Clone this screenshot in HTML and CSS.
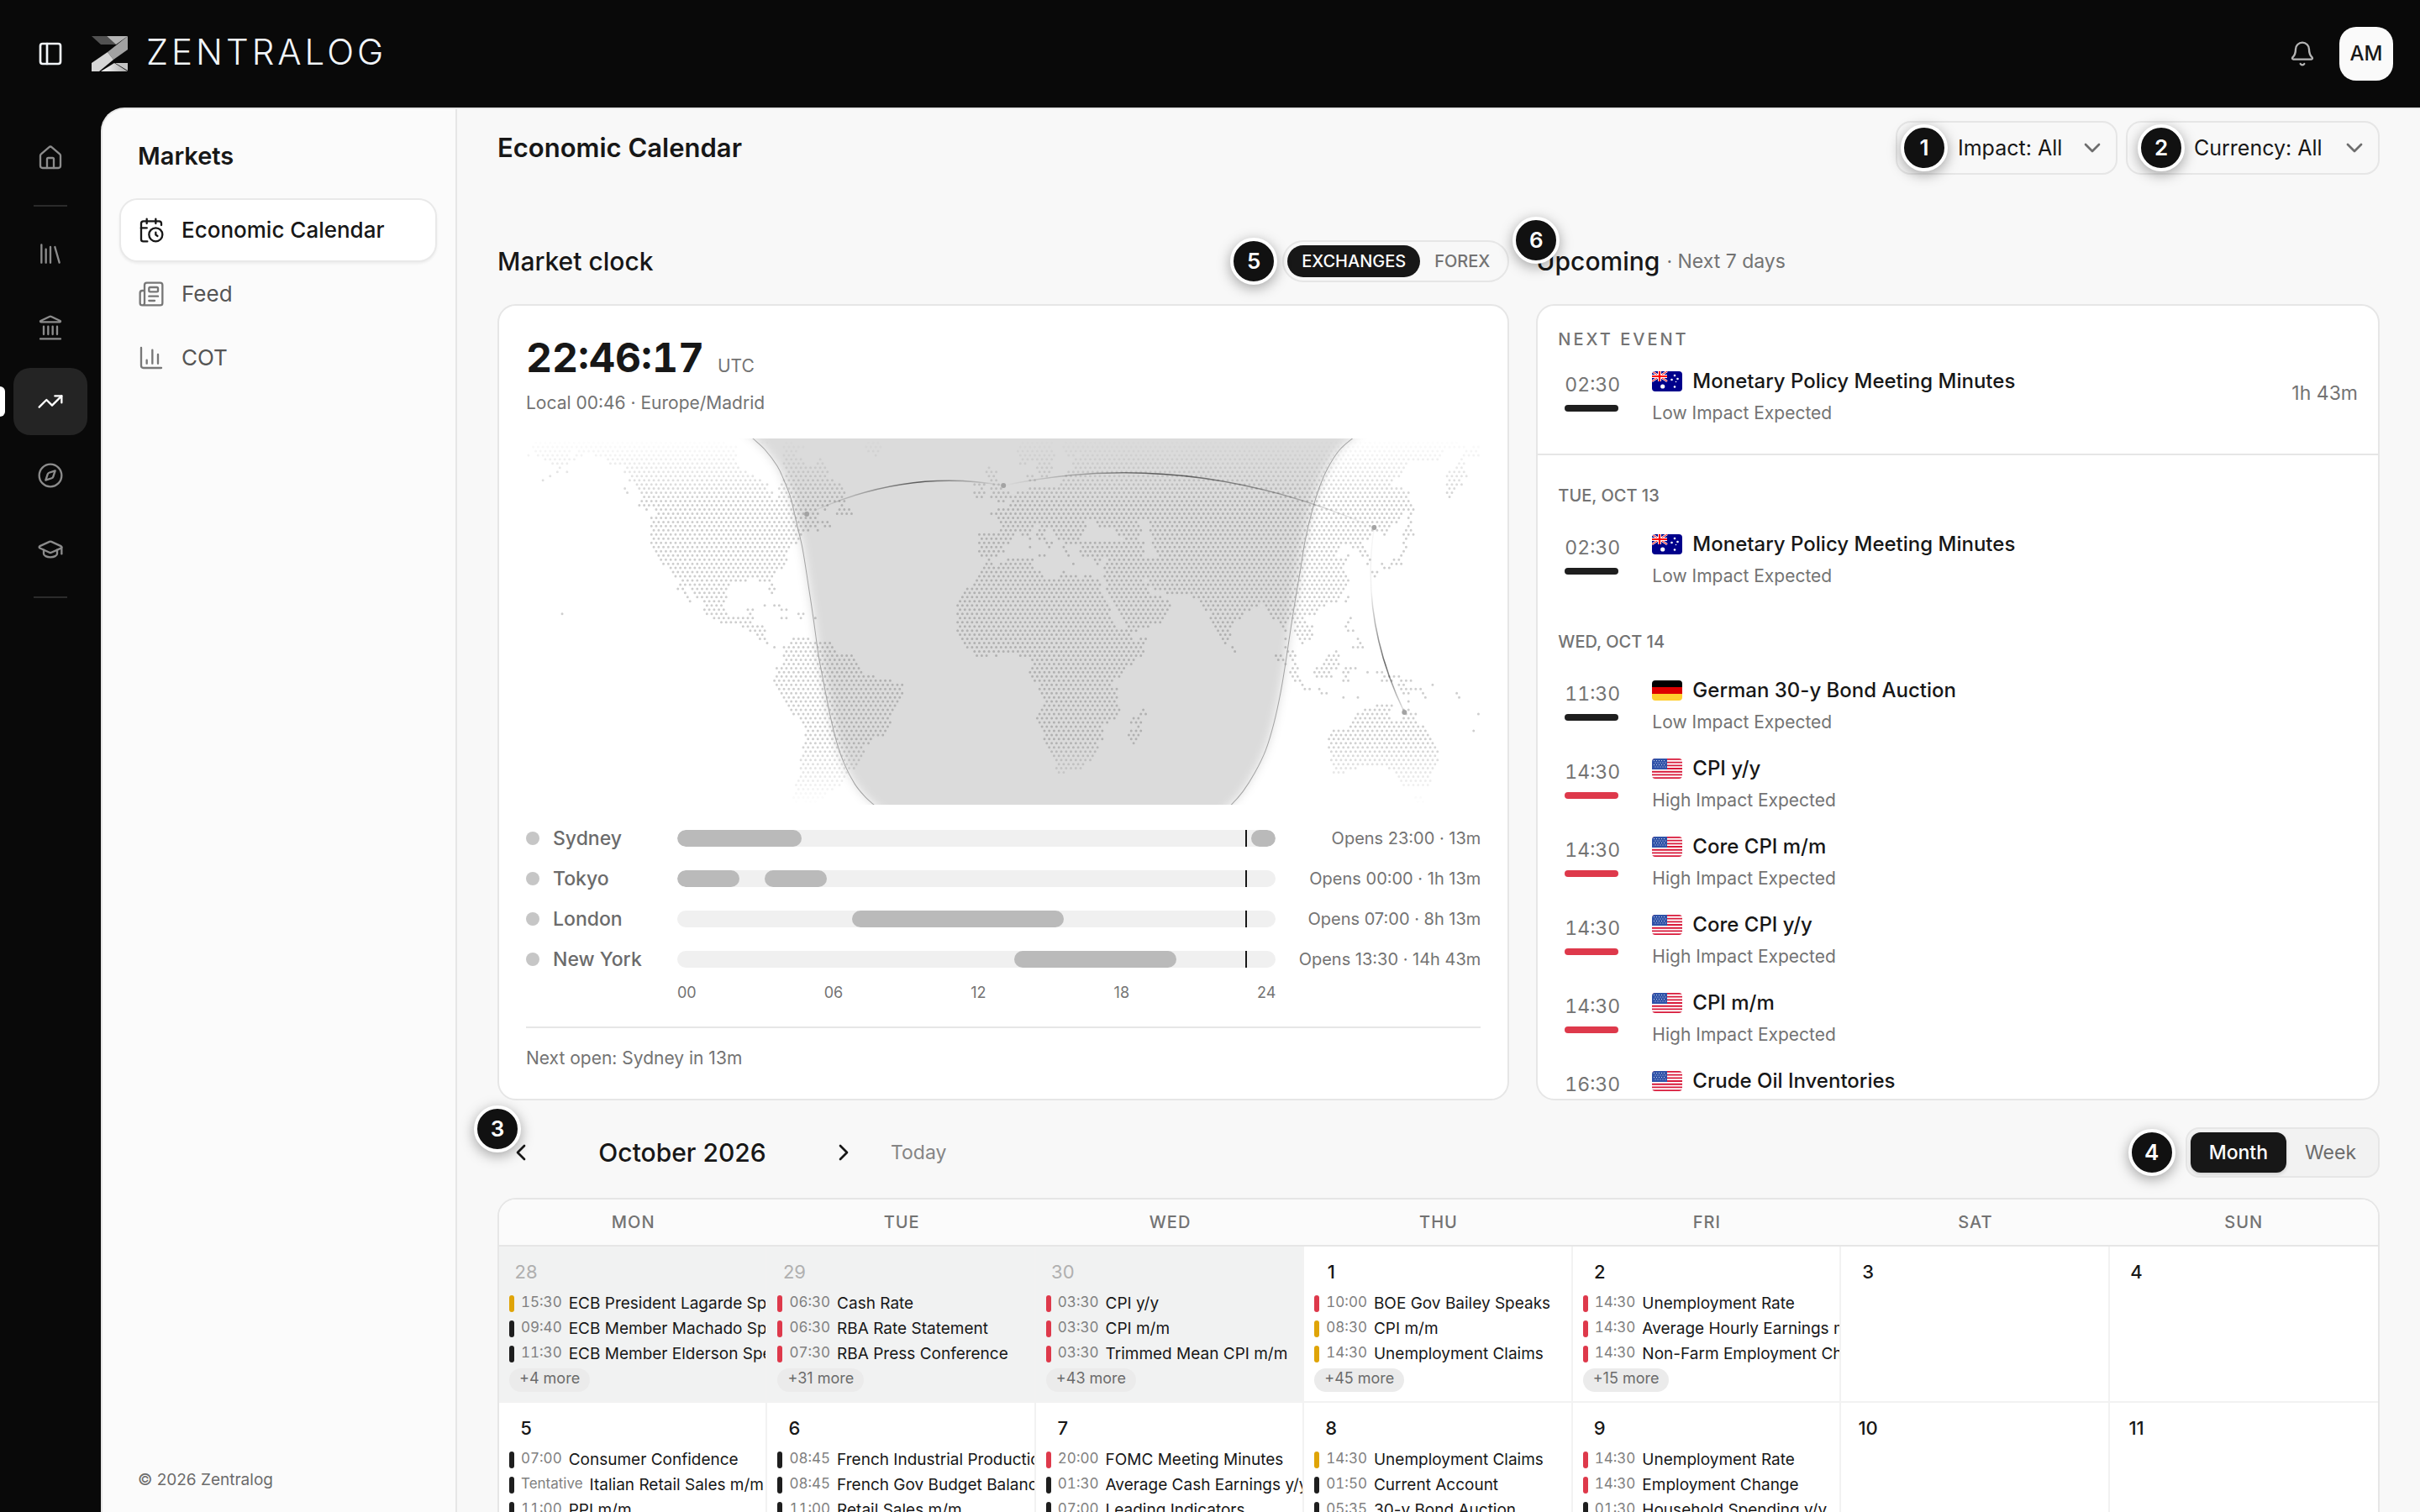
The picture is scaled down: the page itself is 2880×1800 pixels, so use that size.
FILE: index.html
```html
<!DOCTYPE html>
<html lang="en">
<head>
<meta charset="utf-8">
<title>Economic Calendar · Zentralog</title>
<link rel="stylesheet" href="styles.css">
</head>
<body>
<svg class="defs" aria-hidden="true">
  <symbol id="flag-au" viewBox="0 0 36 24">
    <path fill="#00008b" d="M0 0h36v24H0z"/>
    <path stroke="#fff" stroke-width="2.6" d="M0 0l18 12M18 0L0 12"/>
    <path stroke="#f00" stroke-width="1" d="M0 0l18 12M18 0L0 12"/>
    <path stroke="#fff" stroke-width="4" d="M9 0v12M0 6h18"/>
    <path stroke="#f00" stroke-width="2.2" d="M9 0v12M0 6h18"/>
    <g fill="#fff"><circle cx="12.700" cy="18" r="2.600"/><circle cx="27" cy="5" r="1.300"/><circle cx="23.500" cy="10" r="1.300"/><circle cx="30.500" cy="9" r="1.300"/><circle cx="28.500" cy="12.500" r=".8"/><circle cx="27" cy="18.500" r="1.300"/></g>
  </symbol>
  <symbol id="flag-de" viewBox="0 0 36 24">
    <path fill="#000" d="M0 0h36v8H0z"/><path fill="#d00" d="M0 8h36v8H0z"/><path fill="#ffce2e" d="M0 16h36v8H0z"/>
  </symbol>
  <symbol id="flag-us" viewBox="0 0 36 24">
    <path fill="#fff" d="M0 0h36v24H0z"/>
    <path stroke="#d8193a" stroke-width="1.850" d="M0 .9h36M0 4.600h36M0 8.300h36M0 12h36M0 15.700h36M0 19.400h36M0 23.100h36"/>
    <path fill="#2f52a8" d="M0 0h18v13H0z"/>
    <path stroke="#fff" stroke-width="1" stroke-dasharray="1 2" d="M2 2.500h15M3.500 5h13M2 7.500h15M3.500 10h13" opacity=".75"/>
  </symbol>
  <symbol id="chevron-down" viewBox="0 0 24 24"><path d="m6 9 6 6 6-6"/></symbol>
</svg>

<header class="topbar">
  <button class="icon-button" aria-label="Toggle sidebar">
    <svg class="icon" viewBox="0 0 24 24"><rect width="18" height="18" x="3" y="3" rx="2"/><path d="M9 3v18"/></svg>
  </button>
  <a class="brand" href="#">
    <svg class="brand-mark" viewBox="0 0 43 42" aria-hidden="true">
      <defs><linearGradient id="fold"><stop offset="0" stop-color="#fff"/><stop offset="1" stop-color="#a8a8a8"/></linearGradient></defs>
      <path fill="#525252" d="M0 0h18l11 10H11z"/>
      <path fill="#b4b4b4" d="M18 0h25L29 10z"/>
      <path fill="#a2a2a2" d="M43 0v16L26 28l-7-9z"/>
      <path fill="#d6d6d6" d="M19 19l7 9L9 42H0V32z"/>
      <path fill="url(#fold)" d="M11 42l16-10 16 10z"/>
      <path fill="#c4c4c4" d="M28 32h15v9z"/>
    </svg>
    <span class="brand-name">ZENTRALOG</span>
  </a>
  <button class="icon-button bell" aria-label="Notifications">
    <svg class="icon" viewBox="0 0 24 24"><path d="M10.268 21a2 2 0 0 0 3.464 0"/><path d="M3.262 15.326A1 1 0 0 0 4 17h16a1 1 0 0 0 .74-1.673C19.410 13.956 18 12.499 18 8A6 6 0 0 0 6 8c0 4.499-1.411 5.956-2.738 7.326"/></svg>
  </button>
  <button class="avatar">AM</button>
</header>

<div class="shell">
  <nav class="rail" aria-label="Sections">
    <a href="#" class="rail-link" aria-label="Home"><svg class="icon" viewBox="0 0 24 24"><path d="M15 21v-8a1 1 0 0 0-1-1h-4a1 1 0 0 0-1 1v8"/><path d="M3 10a2 2 0 0 1 .709-1.528l7-5.999a2 2 0 0 1 2.582 0l7 5.999A2 2 0 0 1 21 10v9a2 2 0 0 1-2 2H5a2 2 0 0 1-2-2z"/></svg></a>
    <hr class="rail-rule">
    <a href="#" class="rail-link" aria-label="Library"><svg class="icon" viewBox="0 0 24 24"><path d="m16 6 4 14M12 6v14M8 8v12M4 4v16"/></svg></a>
    <a href="#" class="rail-link" aria-label="Institutions"><svg class="icon" viewBox="0 0 24 24"><path d="M10 18v-7M14 18v-7M18 18v-7M6 18v-7M3 22h18"/><path d="M11.120 2.198a2 2 0 0 1 1.760.006l7.866 3.847c.476.233.310.949-.220.949H3.474c-.530 0-.695-.716-.220-.949z"/></svg></a>
    <a href="#" class="rail-link is-active" aria-label="Markets"><svg class="icon" viewBox="0 0 24 24"><path d="M16 7h6v6"/><path d="m22 7-8.500 8.500-5-5L2 17"/></svg></a>
    <a href="#" class="rail-link" aria-label="Explore"><svg class="icon" viewBox="0 0 24 24"><circle cx="12" cy="12" r="10"/><path d="m16.240 7.760-1.804 5.411a2 2 0 0 1-1.265 1.265L7.760 16.240l1.804-5.411a2 2 0 0 1 1.265-1.265z"/></svg></a>
    <a href="#" class="rail-link" aria-label="Academy"><svg class="icon" viewBox="0 0 24 24"><path d="M21.420 10.922a1 1 0 0 0-.019-1.838L12.830 5.180a2 2 0 0 0-1.660 0L2.600 9.080a1 1 0 0 0 0 1.832l8.570 3.908a2 2 0 0 0 1.660 0z"/><path d="M22 10v6"/><path d="M6 12.500V16a6 3 0 0 0 12 0v-3.500"/></svg></a>
    <hr class="rail-rule">
  </nav>

  <div class="workspace">
    <aside class="sidebar">
      <h2 class="sidebar-title">Markets</h2>
      <nav class="sidebar-nav" aria-label="Markets">
        <a href="#" class="side-link is-active"><svg class="icon" viewBox="0 0 24 24"><path d="M16 14v2.200l1.600 1"/><path d="M16 2v4"/><path d="M21 7.500V6a2 2 0 0 0-2-2H5a2 2 0 0 0-2 2v14a2 2 0 0 0 2 2h3.500"/><path d="M3 10h5"/><path d="M8 2v4"/><circle cx="16" cy="16" r="6"/></svg>Economic Calendar</a>
        <a href="#" class="side-link"><svg class="icon" viewBox="0 0 24 24"><path d="M15 18h-5M18 14h-8"/><path d="M4 22h16a2 2 0 0 0 2-2V4a2 2 0 0 0-2-2H8a2 2 0 0 0-2 2v16a2 2 0 0 1-4 0v-9a2 2 0 0 1 2-2h2"/><rect width="8" height="4" x="10" y="6" rx="1"/></svg>Feed</a>
        <a href="#" class="side-link"><svg class="icon" viewBox="0 0 24 24"><path d="M3 3v16a2 2 0 0 0 2 2h16M18 17V9M13 17V5M8 17v-3"/></svg>COT</a>
      </nav>
      <p class="copyright">© 2026 Zentralog</p>
    </aside>

    <main class="main">
      <header class="page-head">
        <h1 class="page-title">Economic Calendar</h1>
        <div class="filters">
          <div class="filter filter-impact">
            <select aria-label="Impact"><option>Impact: All</option></select>
            <svg class="icon chevron"><use href="#chevron-down"/></svg>
            <span class="badge">1</span>
          </div>
          <div class="filter filter-currency">
            <select aria-label="Currency"><option>Currency: All</option></select>
            <svg class="icon chevron"><use href="#chevron-down"/></svg>
            <span class="badge">2</span>
          </div>
        </div>
      </header>

      <div class="overview">
        <section class="column">
          <div class="section-head">
            <h2 class="section-title">Market clock</h2>
            <div class="pill-toggle">
              <span class="badge">5</span>
              <button class="is-on">EXCHANGES</button><button>FOREX</button>
            </div>
          </div>
          <div class="card clock">
            <p class="time"><span class="time-value">22:46:17</span><span class="time-zone">UTC</span></p>
            <p class="local">Local 00:46 · Europe/Madrid</p>
            <svg class="map" viewBox="0 0 1136 436" role="img" aria-label="World map with night area">
              <defs>
                <linearGradient id="fade" x2="0" y2="1"><stop offset="0" stop-color="#fff" stop-opacity="0"/><stop offset=".18" stop-color="#fff"/><stop offset=".82" stop-color="#fff"/><stop offset="1" stop-color="#fff" stop-opacity="0"/></linearGradient>
                <mask id="fade-mask" maskUnits="userSpaceOnUse" x="0" y="0" width="1136" height="436"><path fill="url(#fade)" d="M0 0h1136v436H0z"/></mask>
                <filter id="dusk" x="-10%" width="120%"><feGaussianBlur stdDeviation="6"/></filter>
                <linearGradient id="arc-a" gradientUnits="userSpaceOnUse" x1="334" y1="0" x2="568" y2="0"><stop offset="0" stop-opacity="0"/><stop offset=".25" stop-opacity=".22"/><stop offset=".58" stop-opacity=".6"/><stop offset=".85" stop-opacity=".2"/><stop offset="1" stop-opacity="0"/></linearGradient>
                <linearGradient id="arc-b" gradientUnits="userSpaceOnUse" x1="568" y1="0" x2="1009" y2="0"><stop offset="0" stop-opacity="0"/><stop offset=".2" stop-opacity=".25"/><stop offset=".42" stop-opacity=".6"/><stop offset=".75" stop-opacity=".3"/><stop offset="1" stop-opacity="0"/></linearGradient>
                <linearGradient id="arc-c" gradientUnits="userSpaceOnUse" x1="0" y1="106" x2="0" y2="326"><stop offset="0" stop-opacity=".03"/><stop offset=".35" stop-opacity=".06"/><stop offset=".74" stop-opacity=".6"/><stop offset="1" stop-opacity=".1"/></linearGradient>
              </defs>
              <g mask="url(#fade-mask)"><path id="land" class="land"/></g>
              <path id="night" class="night" filter="url(#dusk)"/>
              <path id="dusk-line" class="dusk-line"/>
              <path id="dawn-line" class="dusk-line"/>
              <path class="arc" stroke="url(#arc-a)" d="M334 90Q451 35 568 56"/>
              <path class="arc" stroke="url(#arc-b)" d="M568 56Q788 9 1009 106"/>
              <path class="arc" stroke="url(#arc-c)" d="M1009 106Q992 216 1045 326"/>
              <g class="city"><circle cx="334" cy="90" r="3"/><circle cx="568" cy="56" r="3"/><circle cx="1009" cy="106" r="3"/><circle cx="1045" cy="326" r="3"/></g>
            </svg>
            <div class="sessions">
              <div class="session"><span class="city-name">Sydney</span><span class="track"><i style="left:0;width:20.83%"></i><i style="left:95.83%;width:4.17%"></i></span><span class="opens">Opens 23:00 · 13m</span></div>
              <div class="session"><span class="city-name">Tokyo</span><span class="track"><i style="left:0;width:10.42%"></i><i style="left:14.58%;width:10.42%"></i></span><span class="opens">Opens 00:00 · 1h 13m</span></div>
              <div class="session"><span class="city-name">London</span><span class="track"><i style="left:29.17%;width:35.42%"></i></span><span class="opens">Opens 07:00 · 8h 13m</span></div>
              <div class="session"><span class="city-name">New York</span><span class="track"><i style="left:56.25%;width:27.08%"></i></span><span class="opens">Opens 13:30 · 14h 43m</span></div>
            </div>
            <div class="axis"><span>00</span><span>06</span><span>12</span><span>18</span><span>24</span></div>
            <p class="next-open">Next open: Sydney in 13m</p>
          </div>
        </section>

        <section class="column">
          <div class="section-head">
            <h2 class="section-title">Upcoming</h2><span class="section-note">· Next 7 days</span>
            <span class="badge">6</span>
          </div>
          <div class="card upcoming">
            <div class="next-event">
              <h3 class="eyebrow">NEXT EVENT</h3>
              <article class="event low"><time class="event-time">02:30</time><div class="event-body"><h4><svg class="flag"><use href="#flag-au"/></svg>Monetary Policy Meeting Minutes</h4><p>Low Impact Expected</p></div><span class="countdown">1h 43m</span></article>
            </div>
            <h3 class="day-head">TUE, OCT 13</h3>
            <article class="event low"><time class="event-time">02:30</time><div class="event-body"><h4><svg class="flag"><use href="#flag-au"/></svg>Monetary Policy Meeting Minutes</h4><p>Low Impact Expected</p></div></article>
            <h3 class="day-head">WED, OCT 14</h3>
            <article class="event low"><time class="event-time">11:30</time><div class="event-body"><h4><svg class="flag"><use href="#flag-de"/></svg>German 30-y Bond Auction</h4><p>Low Impact Expected</p></div></article>
            <article class="event high"><time class="event-time">14:30</time><div class="event-body"><h4><svg class="flag"><use href="#flag-us"/></svg>CPI y/y</h4><p>High Impact Expected</p></div></article>
            <article class="event high"><time class="event-time">14:30</time><div class="event-body"><h4><svg class="flag"><use href="#flag-us"/></svg>Core CPI m/m</h4><p>High Impact Expected</p></div></article>
            <article class="event high"><time class="event-time">14:30</time><div class="event-body"><h4><svg class="flag"><use href="#flag-us"/></svg>Core CPI y/y</h4><p>High Impact Expected</p></div></article>
            <article class="event high"><time class="event-time">14:30</time><div class="event-body"><h4><svg class="flag"><use href="#flag-us"/></svg>CPI m/m</h4><p>High Impact Expected</p></div></article>
            <article class="event high"><time class="event-time">16:30</time><div class="event-body"><h4><svg class="flag"><use href="#flag-us"/></svg>Crude Oil Inventories</h4></div></article>
          </div>
        </section>
      </div>

      <div class="calendar-bar">
        <span class="badge">3</span>
        <button class="step" aria-label="Previous month"><svg class="icon" viewBox="0 0 24 24"><path d="m15 18-6-6 6-6"/></svg></button>
        <h2 class="month">October 2026</h2>
        <button class="step" aria-label="Next month"><svg class="icon" viewBox="0 0 24 24"><path d="m9 18 6-6-6-6"/></svg></button>
        <button class="today">Today</button>
        <div class="view-toggle">
          <span class="badge">4</span>
          <button class="is-on">Month</button><button>Week</button>
        </div>
      </div>

      <div class="calendar">
        <table>
          <thead><tr><th>MON</th><th>TUE</th><th>WED</th><th>THU</th><th>FRI</th><th>SAT</th><th>SUN</th></tr></thead>
          <tbody>
            <tr>
              <td class="outside"><b>28</b>
                <p class="item medium"><time>15:30</time><span>ECB President Lagarde Speaks</span></p>
                <p class="item low"><time>09:40</time><span>ECB Member Machado Speaks</span></p>
                <p class="item low"><time>11:30</time><span>ECB Member Elderson Speaks</span></p>
                <button class="more">+4 more</button></td>
              <td class="outside"><b>29</b>
                <p class="item high"><time>06:30</time><span>Cash Rate</span></p>
                <p class="item high"><time>06:30</time><span>RBA Rate Statement</span></p>
                <p class="item high"><time>07:30</time><span>RBA Press Conference</span></p>
                <button class="more">+31 more</button></td>
              <td class="outside"><b>30</b>
                <p class="item high"><time>03:30</time><span>CPI y/y</span></p>
                <p class="item high"><time>03:30</time><span>CPI m/m</span></p>
                <p class="item high"><time>03:30</time><span>Trimmed Mean CPI m/m</span></p>
                <button class="more">+43 more</button></td>
              <td><b>1</b>
                <p class="item high"><time>10:00</time><span>BOE Gov Bailey Speaks</span></p>
                <p class="item medium"><time>08:30</time><span>CPI m/m</span></p>
                <p class="item medium"><time>14:30</time><span>Unemployment Claims</span></p>
                <button class="more">+45 more</button></td>
              <td><b>2</b>
                <p class="item high"><time>14:30</time><span>Unemployment Rate</span></p>
                <p class="item high"><time>14:30</time><span>Average Hourly Earnings m/m</span></p>
                <p class="item high"><time>14:30</time><span>Non-Farm Employment Change</span></p>
                <button class="more">+15 more</button></td>
              <td><b>3</b></td>
              <td><b>4</b></td>
            </tr>
            <tr>
              <td><b>5</b>
                <p class="item low"><time>07:00</time><span>Consumer Confidence</span></p>
                <p class="item low"><time>Tentative</time><span>Italian Retail Sales m/m</span></p>
                <p class="item low"><time>11:00</time><span>PPI m/m</span></p></td>
              <td><b>6</b>
                <p class="item low"><time>08:45</time><span>French Industrial Production m/m</span></p>
                <p class="item low"><time>08:45</time><span>French Gov Budget Balance</span></p>
                <p class="item low"><time>11:00</time><span>Retail Sales m/m</span></p></td>
              <td><b>7</b>
                <p class="item high"><time>20:00</time><span>FOMC Meeting Minutes</span></p>
                <p class="item low"><time>01:30</time><span>Average Cash Earnings y/y</span></p>
                <p class="item low"><time>07:00</time><span>Leading Indicators</span></p></td>
              <td><b>8</b>
                <p class="item medium"><time>14:30</time><span>Unemployment Claims</span></p>
                <p class="item low"><time>01:50</time><span>Current Account</span></p>
                <p class="item low"><time>05:35</time><span>30-y Bond Auction</span></p></td>
              <td><b>9</b>
                <p class="item high"><time>14:30</time><span>Unemployment Rate</span></p>
                <p class="item high"><time>14:30</time><span>Employment Change</span></p>
                <p class="item low"><time>01:30</time><span>Household Spending y/y</span></p></td>
              <td><b>10</b></td>
              <td><b>11</b></td>
            </tr>
          </tbody>
        </table>
      </div>
    </main>
  </div>
</div>
<script src="map.js"></script>
</body>
</html>
```
FILE: map.js
```js
// Land as runs of dots, one string per grid row from north to south.
// Each run is "from-to" in survey units; 14.51 units are one dot column.
const WEST = [
  "95-665 775-790 845-860 1092-1122",
  "87-700 845-905 1088-1130 1553-1568",
  "95-200 225-690 850-880 1097-1125 1555-1568",
  "73 102-190 218-232 277-690 845-870 1118 1553-1568",
  "122-190 210 312-690 845-895 950 1557",
  "146-190 320-690 845-900 940-960 1553",
  "167 370-705 850-970 1458",
  "160 190 363-728 850-975 1450-1480",
  "138 385-750 850-965 1458-1480",
  "116 378-770 845-990 1465-1480",
  "400-795 830-1010 1422-1445 1472-1490",
  "363 400-790 825-1010 1430-1437 1465-1500",
  "370 407-800 835-1020 1422-1445 1472-1510 1545-1568",
  "421-800 830-1010 1422-1437 1465-1510 1535-1568",
  "414-790 805-1025 1487-1505 1530-1568",
  "407 421-980 1015 1522-1568",
  "428 458-935 965 1010-1035 1487-1568",
  "465-945 1000-1045 1465-1568",
  "443-940 1487-1568",
  "450-970 1495-1568",
  "443-940 965-980 1500-1568",
  "450-915 943 1493-1568",
  "443-895 1430-1530",
  "450-885 1430-1525",
  "443-880 1430-1515",
  "450-860 1430-1502",
  "457-845 1437-1502",
  "465-845 1437-1480",
  "472-850 1458 1517-1568",
  "480-845 1450-1466 1495-1568",
  "500-835 1443-1568",
  "508-815 1437-1568",
  "515-810 1430-1568",
  "537-725 770-800 1422-1568",
  "530-675 805 1415-1568",
  "522-537 565-670 798-815 1393-1568",
  "543 573-668 805 1385-1568",
  "551 580-665 1378-1568",
  "558 602-660 1370-1568",
  "610-655 785 812-828 1365-1568",
  "602-660 733-747 835-850 1370-1568",
  "175 610-675 740 885-900 1365-1568",
  "632-750 835-850 893 936 1370-1568",
  "653-745 1365-1568",
  "718-778 1370-1568",
  "740-785 1365-1568",
  "762-778 1370-1568",
  "770-785 870-915 1378-1568",
  "791 863-980 1385-1568",
  "813 843-990 1393-1568",
  "848-998 1415-1568",
  "843-1050 1422-1450 1480 1553",
  "848-1055",
  "843-1065",
  "820-1070",
  "827-1080",
  "820-1110",
  "812-1162",
  "820-1197",
  "827-1190",
  "835-1197",
  "842-1190",
  "850-1180",
  "857-1175",
  "863-1168",
  "870-1165",
  "893-1155",
  "900-1160",
  "907-1155",
  "915-1150",
  "907-1140",
  "915-1105",
  "907-1090",
  "900-1080",
  "907-1085",
  "900-1075",
  "893-1070",
  "900-1060",
  "893-1050",
  "900-1030",
  "893-1025",
  "885-1015",
  "878-1015",
  "885-990",
  "878-965",
  "870-957",
  "878 905-935"
];
const EAST = [
  "50-125 170-1350",
  "40-130 170-1370 1400-1414",
  "35-125 180-200 215-1300 1385-1405",
  "40-135 180-195 230-1305 1375-1385 1400-1414",
  "48-130 200-1290 1370",
  "35-50 90-125 195-1200 1355-1370",
  "85-125 197-1190 1350-1370",
  "90-120 180-1175 1320-1370",
  "57-72 100-115 175-1170 1325-1380",
  "65-80 170-1155 1320-1360",
  "157-1150 1320-1365",
  "65-1185 1325-1340",
  "28-1205 1320-1335",
  "5-1195 1327",
  "12-1205",
  "5-1200 1210",
  "0-1185 1203-1218",
  "0-1175 1210",
  "0-235 250-1170 1203",
  "0-230 270-290 310-390 430-1165 1210",
  "0-65 100 115-235 275-385 435-1145 1203",
  "0-60 90-105 140-225 330-400 428-1140 1195-1210",
  "5-20 40-60 85-105 150-220 330-390 435-1090 1130 1190-1218",
  "7 65 100-115 155-215 350-385 440-1080 1190",
  "115-130 175-200 215-400 435-1065 1185",
  "65 122 165 225-405 445-1000 1035-1065 1190",
  "172 220-400 450-990 1060-1075 1185",
  "93-108 180 225-400 455-980 1020 1070-1080 1180",
  "0-70 260-275 300-1015 1087 1160-1175",
  "0-70 195 268 290-1005 1083 1125 1150-1180",
  "0-75 290-1000 1130-1145",
  "0-90 165 297-1015 1095-1110",
  "0-100 155-170 185-200 225-245 290-1010 1102",
  "0-270 295-405 425-1020",
  "0-280 305-407 420-1015",
  "0-275 300-410 440-1010",
  "0-280 310-425 478-1000",
  "0-285 310-445 457 560-990 1020",
  "0-285 320-480 575-980 1015",
  "0-295 325-485 585-750 775-950",
  "0-300 335-480 590-720 785-930",
  "0-300 340-470 615-705 793-900 920",
  "0-305 345-465 615-695 800-890 1030",
  "0-315 355-450 620-680 815-830 860-895 1020",
  "0-320 360-420 630-665 830 870-910 1015",
  "0-380 630-665 835 865-900 1022-1037",
  "0-355 640-665 870-910",
  "0-365 400-412 645-660 835 878-905 1050",
  "0-400 652 885 1058",
  "0-405 673 835 1037-1065",
  "0-410 680 840-855 985",
  "35-400 805-815 848-860 970-993",
  "72-380 810-825 850-862 955-985",
  "80-370 840 865 950-990",
  "72-350 850-870 925-985 1015-1045",
  "65-340 850-865 920-965 1007-1022 1080 1110-1120",
  "72-330 858-870 925-970 1015 1130-1180",
  "80-315 865-880 1007-1022 1125-1160 1180-1215",
  "100-310 885 1170-1195 1277",
  "93-320 893-907 935 1180-1240",
  "100-315 943-957 1190-1205 1247 1348",
  "107-320 1008 1050 1255 1355",
  "115-325 1203",
  "107-325 1110-1155",
  "100-330 405 1073 1090-1145 1188-1203",
  "93-320 400-412 1050-1135 1195-1225 1414",
  "85-315 377-395 1043-1150 1190-1215",
  "93-300 370-400 1037-1225",
  "107-275 385-395 1030-1250",
  "107-285 370-400 980-1255 1400",
  "115-280 362-390 970-1260",
  "107-285 370-385 963-1270",
  "115-265 377 970-1280",
  "122-265 963-1285",
  "130-260 970-1290",
  "137-250 978-1285",
  "145-245 970-1292",
  "152-225 978-1285",
  "145-217 985-1045 1145-1280",
  "152-165 978-1008 1165-1272",
  "1173-1260",
  "1180-1265",
  "1190-1265",
  "",
  "",
  "1225-1240",
  "1232-1247"
];

const COLUMN = 1136 / 198;
const ROW = COLUMN * Math.sqrt(3) / 2;
const UNIT = 14.51;
const dots = new Set();

function addRuns(rows, shift) {
  rows.forEach((line, row) => {
    const stagger = row % 2 ? 0.5 : 0;
    line.split(" ").filter(Boolean).forEach(run => {
      const [from, to = from] = run.split("-").map(Number);
      const first = Math.round((from + shift) / UNIT - stagger);
      const last = Math.round((to + shift) / UNIT - stagger);
      for (let col = first; col <= last; col++) dots.add(row + ":" + col);
    });
  });
}
addRuns(WEST, -66);
addRuns(EAST, 1451.5);

let land = "";
for (const key of dots) {
  const [row, col] = key.split(":").map(Number);
  const x = (col + (row % 2 ? 0.5 : 0)) * COLUMN;
  const y = (row + 1) * ROW;
  land += `M${x.toFixed(1)} ${y.toFixed(1)}h0`;
}
document.getElementById("land").setAttribute("d", land);

// Day and night boundary, west edge and east edge, north to south.
const DUSK = [[262,-8],[270,0],[284,13],[299,33],[307,50],[315,71],[322,101],[329,131],[336,175],[342,215],[348,258],[354,290],[361.5,328],[369.5,361],[379,388],[391,411],[403,426],[414,436],[424,444]];
const DAWN = [[993,-8],[983,0],[967.5,14],[953.5,36],[944,58],[935,87],[927,121],[921.5,155],[916,187],[910,225],[904,265],[898,301],[890,338],[880,371],[867,398],[853,420],[839,436],[829,444]];

function curve(points) {
  let d = "";
  for (let i = 0; i < points.length - 1; i++) {
    const p0 = points[i - 1] || points[i], p1 = points[i], p2 = points[i + 1], p3 = points[i + 2] || p2;
    d += `C${p1[0] + (p2[0] - p0[0]) / 6} ${p1[1] + (p2[1] - p0[1]) / 6} ${p2[0] - (p3[0] - p1[0]) / 6} ${p2[1] - (p3[1] - p1[1]) / 6} ${p2[0]} ${p2[1]}`;
  }
  return d;
}
document.getElementById("dusk-line").setAttribute("d", `M${DUSK[0]}${curve(DUSK)}`);
document.getElementById("dawn-line").setAttribute("d", `M${DAWN[0]}${curve(DAWN)}`);
const back = [...DAWN].reverse();
document.getElementById("night").setAttribute("d",
  `M222 -48L${DUSK[0]}${curve(DUSK)}L464 484L789 484L${back[0]}${curve(back)}L1033 -48Z`);
```
FILE: styles.css
```css
* { box-sizing: border-box; margin: 0; }
html, body { height: 100%; }
body {
  display: flex;
  flex-direction: column;
  overflow: hidden;
  background: #090909;
  color: #171717;
  font: 400 24px/32px Inter, "Liberation Sans", sans-serif;
}
button, select { font: inherit; color: inherit; border: 0; background: none; padding: 0; }
a { color: inherit; text-decoration: none; }
h1, h2, h3, h4 { font-weight: 500; }
.defs { position: absolute; width: 0; height: 0; }
.icon {
  width: 32px; height: 32px; flex: none;
  fill: none; stroke: currentColor; stroke-width: 2; stroke-linecap: round; stroke-linejoin: round;
}

.topbar { display: flex; align-items: center; height: 128px; flex: none; padding: 0 32px 0 44px; color: #f1f5f9; }
.icon-button { display: flex; }
.brand { display: flex; align-items: center; gap: 22px; margin: 0 auto 0 33px; }
.brand-mark { width: 43px; height: 42px; }
.brand-name { padding-bottom: 4px; font-size: 42px; line-height: 48px; font-weight: 300; letter-spacing: 4px; }
.bell { color: #b5b5b5; margin-right: 28px; }
.bell .icon { stroke-width: 1.750; }
.avatar { width: 64px; height: 64px; border-radius: 20px; background: #fafafa; color: #171717; font-weight: 500; }

.shell { display: flex; flex: 1; min-height: 0; }
.rail { width: 120px; flex: none; display: flex; flex-direction: column; align-items: center; gap: 8px; padding-top: 20px; color: #8c8c8c; }
.rail-link { position: relative; display: grid; place-items: center; width: 88px; height: 80px; border-radius: 20px; }
.rail-link .icon { stroke-width: 1.750; }
.rail-link.is-active { background: #242424; color: #fff; }
.rail-link.is-active::before { content: ""; position: absolute; left: -16px; top: 22px; width: 6px; height: 36px; border-radius: 0 6px 6px 0; background: #fff; }
.rail-rule { width: 40px; height: 2px; margin: 8px 0; border: 0; background: #2b2b2b; }

.workspace { display: flex; flex: 1; min-width: 0; border: solid #e6e6e6; border-width: 2px 0 0 2px; border-radius: 28px 0 0 0; background: #f8f8f8; overflow: hidden; }
.sidebar { width: 422px; flex: none; display: flex; flex-direction: column; padding: 40px 22px 22px 20px; border-right: 2px solid #e6e6e6; background: #fbfbfb; }
.sidebar-title { padding: 0 22px; font-size: 29px; font-weight: 600; }
.sidebar-nav { margin-top: 34px; }
.side-link { display: flex; align-items: center; gap: 20px; height: 76px; padding: 0 20px; border: 2px solid transparent; border-radius: 22px; color: #555; font-size: 26px; }
.side-link .icon { color: #777; stroke-width: 1.750; }
.side-link.is-active { background: #fff; border-color: #e9e9e9; color: #171717; font-weight: 500; box-shadow: 0 2px 3px rgba(0, 0, 0, .06); }
.side-link.is-active .icon { color: #171717; }
.copyright { margin-top: auto; padding: 0 22px; font-size: 19px; color: #6b6b6b; }

.main { flex: 1; min-width: 0; padding: 0 48px; }
.page-head { display: flex; align-items: center; justify-content: space-between; height: 92px; }
.page-title { font-size: 31px; font-weight: 600; }
.filters { display: flex; gap: 10px; }
.filter { position: relative; display: grid; align-items: center; height: 64px; border: 2px solid #e6e6e6; border-radius: 18px; }
.filter-impact { width: 264px; }
.filter-currency { width: 302px; }
.filter select, .filter .chevron { grid-area: 1 / 1; }
.filter select { appearance: none; height: 60px; width: 100%; padding-left: 72px; font-size: 25px; }
.filter-currency select { padding-left: 79px; }
.chevron { justify-self: end; margin-right: 12px; color: #6e6e6e; pointer-events: none; }
.badge {
  position: absolute; display: grid; place-items: center; width: 56px; height: 56px;
  border: 4px solid #fff; border-radius: 50%; background: #111; color: #fff;
  font-size: 26px; font-weight: 600; box-shadow: 0 4px 16px rgba(0, 0, 0, .35);
}
.filter .badge { left: 4px; top: 2px; }
.filter-currency .badge { left: 12px; }

.overview { display: grid; grid-template-columns: 6fr 5fr; gap: 32px; padding-top: 64px; }
.column { display: flex; flex-direction: column; gap: 26px; min-width: 0; }
.section-head { position: relative; display: flex; align-items: center; height: 50px; }
.section-title { font-size: 30px; }
.section-note { margin-left: 8px; color: #737373; font-size: 23px; }
.section-head > .badge { left: -28px; top: -28px; }
.pill-toggle { position: relative; display: flex; margin-left: auto; padding: 4px; border: 2px solid #e6e6e6; border-radius: 25px; color: #737373; font-size: 20px; line-height: 38px; font-weight: 500; }
.pill-toggle button { padding: 0 17px; border-radius: 19px; }
.pill-toggle .is-on, .view-toggle .is-on { background: #171717; color: #fff; }
.pill-toggle .badge { left: -64px; top: -5px; }

.card { border: 2px solid #e6e6e6; border-radius: 22px; background: #fff; }
.clock { padding: 32px; }
.time { display: flex; align-items: baseline; gap: 16px; height: 60px; line-height: 60px; }
.time-value { font-size: 48px; font-weight: 700; font-variant-numeric: tabular-nums; }
.time-zone { font-size: 21px; color: #737373; }
.local { margin-top: 8px; font-size: 21px; color: #737373; }
.map { display: block; width: 100%; margin: 26px 0 24px; overflow: hidden; }
.land { fill: none; stroke: #cecece; stroke-width: 3; stroke-linecap: round; }
.night { fill: #000; fill-opacity: .14; }
.dusk-line { fill: none; stroke: #a3a3a3; stroke-width: 1; }
.arc { fill: none; stroke-width: 1.500; }
.city { fill: #a3a3a3; }
.sessions { display: grid; gap: 16px; }
.session { display: grid; grid-template-columns: 156px 1fr 220px; gap: 24px; align-items: center; }
.city-name { display: flex; align-items: center; gap: 16px; color: #6b6b6b; font-size: 23px; font-weight: 500; white-space: nowrap; }
.city-name::before { content: ""; width: 16px; height: 16px; border-radius: 50%; background: #c6c6c6; }
.track { position: relative; height: 20px; border-radius: 10px; background: #f0f0f0; overflow: hidden; }
.track i { position: absolute; top: 0; bottom: 0; border-radius: 10px; background: #bababa; }
.track::after { content: ""; position: absolute; left: 94.860%; top: 0; bottom: 0; width: 2px; background: #171717; }
.opens { justify-self: end; font-size: 20px; color: #737373; white-space: nowrap; }
.axis { display: flex; justify-content: space-between; margin: 12px 244px 28px 180px; font-size: 18px; line-height: 24px; color: #737373; }
.next-open { padding-top: 20px; border-top: 2px solid #e6e6e6; font-size: 21px; color: #737373; }

.upcoming { flex: 1; contain: size; overflow: hidden; }
.next-event { padding: 26px 0 18px; border-bottom: 2px solid #e6e6e6; }
.eyebrow { padding: 0 24px; margin-bottom: 11px; font-size: 20px; line-height: 28px; letter-spacing: 3px; color: #737373; }
.day-head { padding: 34px 24px 19px; font-size: 20px; line-height: 28px; color: #737373; }
.event { display: flex; gap: 40px; height: 93px; padding: 9px 24px 0 32px; }
.event-time { width: 64px; padding-top: 4px; color: #737373; font-size: 23px; font-variant-numeric: tabular-nums; white-space: nowrap; }
.event-time::after { content: ""; display: block; height: 8px; margin-top: 8px; border-radius: 4px; background: var(--impact); }
.event-body { flex: 1; }
.event h4 { display: flex; align-items: center; gap: 12px; font-size: 24px; }
.event p { margin-top: 8px; font-size: 21px; line-height: 28px; color: #737373; }
.flag { width: 36px; height: 24px; border-radius: 4px; overflow: hidden; }
.countdown { padding-top: 14px; font-size: 23px; color: #737373; }
.low { --impact: #1e1e1e; }
.medium { --impact: #dfa408; }
.high { --impact: #de394b; }

.calendar-bar { position: relative; display: flex; align-items: center; gap: 8px; margin: 32px 0 24px; }
.calendar-bar > .badge { left: -28px; top: -26px; }
.step { display: grid; place-items: center; width: 56px; height: 56px; }
.month { width: 312px; text-align: center; font-size: 30px; }
.today { padding: 0 20px; color: #858585; font-size: 23px; }
.view-toggle { position: relative; display: flex; margin-left: auto; padding: 4px; border: 2px solid #e6e6e6; border-radius: 16px; background: #f2f2f2; color: #6b6b6b; font-size: 23px; line-height: 48px; }
.view-toggle button { padding: 0 22px; border-radius: 12px; }
.view-toggle .is-on { font-weight: 500; box-shadow: 0 2px 4px rgba(0, 0, 0, .15); }
.view-toggle .badge { left: -70px; top: 0; line-height: 32px; }

.calendar { border: 2px solid #e6e6e6; border-radius: 22px 22px 0 0; background: #fff; overflow: hidden; }
.calendar table { width: 100%; table-layout: fixed; border-collapse: separate; border-spacing: 0; }
.calendar th { height: 56px; padding: 0; border-bottom: 2px solid #e6e6e6; background: #fbfbfb; color: #737373; font-size: 20px; font-weight: 500; letter-spacing: 1px; }
.calendar td { height: 186px; padding: 14px 0 0 12px; border: solid #f2f2f2; border-width: 0 2px 2px 0; vertical-align: top; overflow: hidden; }
.calendar td:last-child { border-right: 0; }
.calendar td b { display: block; width: 40px; margin-bottom: 7px; text-align: center; font-size: 22px; font-weight: 500; }
.calendar .outside { background: #f1f2f2; }
.calendar .outside b { color: #b0b0b0; font-weight: 400; }
.item { display: flex; align-items: center; gap: 8px; height: 30px; overflow: hidden; white-space: nowrap; font-size: 19px; line-height: 30px; }
.item::before { content: ""; width: 6px; height: 20px; border-radius: 3px; background: var(--impact); flex: none; }
.item time { min-width: 48px; padding-bottom: 4px; color: #808080; font-size: 17px; line-height: 24px; font-variant-numeric: tabular-nums; }
.item span { flex: 1; min-width: 0; overflow: hidden; }
.more { display: block; height: 28px; padding: 0 12px 4px; margin-top: 2px; border-radius: 14px; background: #ebebeb; color: #6b6b6b; font-size: 18px; line-height: 24px; }
```
